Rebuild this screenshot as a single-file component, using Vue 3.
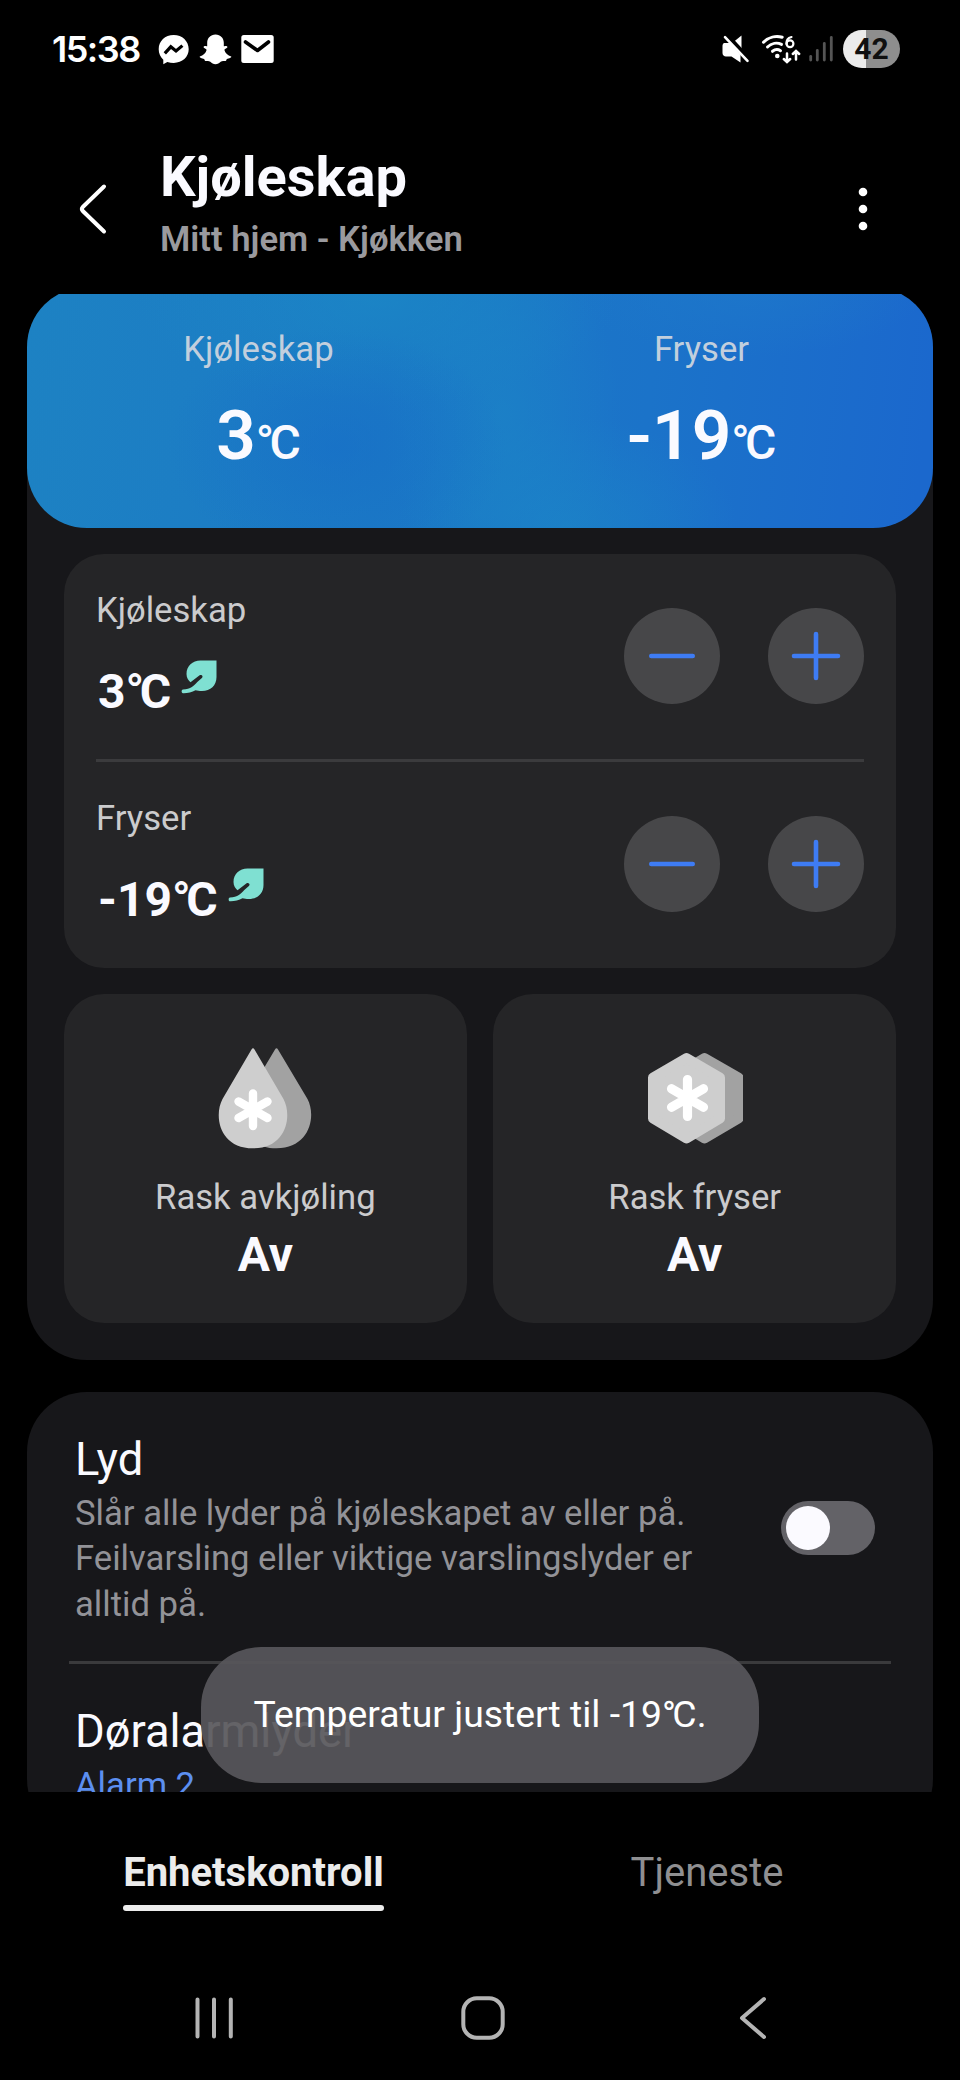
<script setup>
const zones = [
  { name: 'Kjøleskap', value: '3' },
  { name: 'Fryser', value: '-19' },
]
</script>

<template>
  <div class="phone">
    <header class="status">
      <span class="clock">15:38</span>
      <svg class="notif" width="116" height="32" viewBox="0 0 116 32">
        <path fill="#fff" d="M15.700 1C7 1 .700 7 .700 15.300c0 4.200 1.700 7.800 4.600 10.400v4.600l4-2.200c2 .600 4.200.800 6.400.800 8.600 0 15-6 15-13.600C30.700 7 24.300 1 15.700 1z" />
        <path fill="none" stroke="#000" stroke-width="3.200" d="M6.800 19.400l6-6.600 5.200 4.200 6.400-5.400" />
        <path fill="#fff" d="M57.500.500c5 0 8.300 3.600 8.300 8.300v3.400c1.200.300 3-.800 3.600.5.400 1.300-3 2-3 3.300.8 3 3.400 5.600 6.800 6.600.8.800-2.300 2.200-4.300 2.500-.600.500-.300 1.700-1.200 1.900-1.800.100-3.400-.200-5 .800-1.600 1.300-3 2.500-5.200 2.500s-3.600-1.200-5.200-2.500c-1.600-1-3.200-.700-5-.8-.900-.2-.600-1.400-1.200-1.900-2-.300-5.100-1.700-4.300-2.500 3.400-1 6-3.600 6.800-6.600 0-1.300-3.400-2-3-3.300.600-1.300 2.400-.2 3.600-.5V8.800c0-4.700 3.300-8.300 8.300-8.300z" />
        <rect x="83.300" y="1" width="32.400" height="28" rx="2.500" fill="#fff" />
        <path fill="none" stroke="#000" stroke-width="3.600" stroke-linecap="round" stroke-linejoin="round" d="M87.500 8l12 8.500 11-8.500" />
      </svg>
      <svg class="sys" width="116" height="32" viewBox="0 0 116 32">
        <path fill="#fff" d="M3 9h6.500l10 12v7.500L10.500 22.500H5c-2 0-3.500-1.500-3.500-3.500v-7c0-1.500.500-2.500 1.500-3z" />
        <path fill="#fff" d="M20.500 1.500v15L12.500 8z" />
        <path stroke="#000" stroke-width="2.600" d="M6.500 .500l22 24" />
        <path stroke="#fff" stroke-width="2.600" stroke-linecap="round" d="M4 3.200l22.500 23.600" />
        <g fill="none" stroke="#fff" stroke-width="3" stroke-linecap="round">
          <path d="M42.500 8.200c5-5.200 12.500-6.600 18.700-5" />
          <path d="M46.500 13c4-4 9.500-4.800 14-2.600" />
          <path d="M51.500 17.300c2.800-2.200 5.500-2.200 8-.6" />
          <path stroke-width="2.200" d="M70.500 3c-3.400.8-5.300 3.500-5 7" />
          <circle cx="69" cy="9.800" r="3.400" stroke-width="2.200" />
          <path stroke-width="2.500" d="M66 19.500v8m-3.200-2.500l3.200 3 3.200-3M75 25.500v-8m-3.200 2.500l3.200-3 3.200 3" />
        </g>
        <circle cx="56.300" cy="22" r="2.300" fill="#fff" />
        <g stroke="#555" stroke-width="2.800" stroke-linecap="round">
          <path d="M89.700 22.500v3.500" /><path d="M96.300 16.500v9.500" /><path d="M103.300 9.500v16.500" /><path d="M110.300 3.500v22.500" />
        </g>
      </svg>
      <span class="battery">42</span>
    </header>

    <div class="appbar">
      <svg class="back" width="32" height="54" viewBox="0 0 32 54">
        <path fill="none" stroke="#fff" stroke-width="4" stroke-linecap="round" stroke-linejoin="round" d="M27 4.500L5.800 25q-2 2 0 4L27 49.500" />
      </svg>
      <div class="heading">
        <h1>Kjøleskap</h1>
        <p>Mitt hjem - Kjøkken</p>
      </div>
      <svg class="more" width="12" height="46" viewBox="0 0 12 46" fill="#fff">
        <circle cx="6" cy="6" r="4.300" /><circle cx="6" cy="23" r="4.300" /><circle cx="6" cy="40" r="4.300" />
      </svg>
    </div>

    <main>
      <section class="panel first">
        <div class="hero">
          <div v-for="z in zones" :key="z.name" class="col">
            <div class="label">{{ z.name }}</div>
            <div class="big">{{ z.value }}<span class="unit"><span class="deg">°</span>C</span></div>
          </div>
        </div>
        <div class="card list">
          <div v-for="z in zones" :key="z.name" class="row">
            <div>
              <div class="label">{{ z.name }}</div>
              <div class="temp">
                <span>{{ z.value }}<span class="unit"><span class="deg">°</span>C</span></span>
                <svg width="36" height="34" viewBox="0 0 36 34">
                  <path fill="#7fe0d2" d="M35.500.500V17c0 8.500-6 14-14.500 14-3 0-4.500-.300-6.500-.800C11 32 6 33.500 2 33.300c-1.800-.3-1.800-3.500 0-3.700 7.500-.4 11.500-4.100 14.300-7.600l4.600-4c1.800-1.900-.6-4-2.600-2.500L9.500 22.200c-2-1.500-4-4.300-4-8.200C5.500 6 11.500.500 19.500.500z" />
                </svg>
              </div>
            </div>
            <div class="controls">
              <button aria-label="Minus"><svg width="96" height="96"><path d="M27.300 48h41.400" /></svg></button>
              <button aria-label="Pluss"><svg width="96" height="96"><path d="M26 48h44M48 26v44" /></svg></button>
            </div>
          </div>
        </div>
        <div class="tiles">
          <div class="card tile">
            <svg width="94" height="104" viewBox="0 0 94 104">
              <path fill="#a2a2a2" d="M57 2.500q1.500-2.600 3 0L89.500 52c9 17 2.500 49.300-31 49.300S18.500 69 27.500 52z" />
              <path fill="#cecece" d="M33.500 2.500q1.500-2.600 3 0L65.500 52c9 17 3 49.300-30.500 49.300S-4.500 69 4.500 52z" />
              <g stroke="#fff" stroke-width="8.400" stroke-linecap="round"><path d="M35 46.500v32.500M20.500 54.500l29 16.500M49.500 54.500l-29 16.500" /></g>
            </svg>
            <div class="label">Rask avkjøling</div>
            <div class="state">Av</div>
          </div>
          <div class="card tile">
            <svg width="96" height="104" viewBox="0 0 96 104">
              <g stroke-width="10" stroke-linejoin="round">
                <path fill="#a2a2a2" stroke="#a2a2a2" d="M57.500 11L91.500 30.500v41L57.500 91.500l-33-20v-41z" />
                <path fill="#cecece" stroke="#cecece" d="M39.500 11L73 30.500v41L39.500 91.500 6 71.500v-41z" />
              </g>
              <g stroke="#fff" stroke-width="9.200" stroke-linecap="round"><path d="M40.500 32.500v37M24.500 41.700l32 18.600M56.500 41.700l-32 18.600" /></g>
            </svg>
            <div class="label">Rask fryser</div>
            <div class="state">Av</div>
          </div>
        </div>
      </section>

      <section class="panel second">
        <div class="setting">
          <div>
            <h2>Lyd</h2>
            <p>Slår alle lyder på kjøleskapet av eller på.<br>Feilvarsling eller viktige varslingslyder er<br>alltid på.</p>
          </div>
          <div class="switch"><i></i></div>
        </div>
        <div class="setting alarm">
          <div>
            <h2>Døralarmlyder</h2>
            <p class="blue">Alarm 2</p>
          </div>
        </div>
      </section>
    </main>

    <nav class="tabs">
      <div class="tab"><b>Enhetskontroll</b></div>
      <div class="tab"><span>Tjeneste</span></div>
    </nav>

    <footer class="sysnav">
      <svg width="40" height="48" viewBox="0 0 40 48"><path d="M3.500 5.500v37M20 5.500v37M36.800 5.500v37" /></svg>
      <svg class="home" width="48" height="48" viewBox="0 0 48 48"><rect x="4.300" y="4.300" width="39.400" height="39.400" rx="13.500" /></svg>
      <svg width="30" height="48" viewBox="0 0 30 48"><path stroke-linejoin="round" d="M26 5L4 24l22 19" /></svg>
    </footer>

    <div class="toast">Temperatur justert til -19<span class="unit"><span class="deg">°</span>C</span>.</div>
  </div>
</template>

<style>
body { background: #000; }
</style>

<style scoped>
* { box-sizing: border-box; }
h1, h2, p { margin: 0; }
svg { display: block; flex: none; }
.phone {
  position: relative;
  width: 960px;
  height: 2080px;
  overflow: hidden;
  background: #000;
  color: #fafaff;
  font-family: Roboto, Inter, sans-serif;
}
.status { display: flex; align-items: flex-start; height: 98px; padding: 30px 60px 0 52px; }
.clock { width: 106px; line-height: 38px; font-family: Inter, sans-serif; font-weight: 600; font-size: 36px; letter-spacing: -1.500px; color: #fff; }
.notif { margin-top: 4px; }
.sys { margin: 4px 6px 0 auto; }
.battery {
  width: 57px; height: 38px; border-radius: 19px;
  background: linear-gradient(90deg, #ebebeb 23px, #8e8e8e 23px);
  color: #101010; font-weight: 700; font-size: 30px; line-height: 38px; text-align: center;
}
.appbar { display: flex; height: 196px; padding: 46px 91px 0 77px; }
.back { margin-top: 38px; }
.heading { margin-left: 51px; flex: 1; }
h1 { font-size: 56px; line-height: 66px; font-weight: 700; }
.heading p { margin-top: 7px; font-size: 34.670px; line-height: 44px; font-weight: 600; color: #9a9a9e; }
.more { margin-top: 42px; }
main { display: flex; flex-direction: column; height: 1498px; overflow: hidden; padding: 0 27px; }
.panel { flex: none; background: #17171a; border-radius: 60px; }
.first { height: 1073px; margin-top: -7px; }
.hero {
  display: flex; height: 241px; padding: 40px 10px 0; border-radius: 60px;
  background:
    radial-gradient(ellipse 170px 120px at 310px 160px, rgba(22, 108, 200, .55), transparent),
    radial-gradient(ellipse 240px 110px at 350px 10px, rgba(27, 139, 198, .6), transparent),
    radial-gradient(ellipse 120px 170px at 475px 130px, rgba(28, 137, 199, .5), transparent),
    radial-gradient(ellipse 170px 110px at 540px 240px, rgba(28, 135, 199, .6), transparent),
    radial-gradient(ellipse 180px 70px at 720px 0, rgba(30, 122, 202, .6), transparent),
    linear-gradient(97deg, #1d82c3 0%, #1b79c5 40%, #1b73c9 68%, #1b68cd 98%);
}
.col { flex: 1; text-align: center; }
.label { font-size: 34.670px; line-height: 44px; color: #cbcbcd; }
.hero .label { color: #c2cfdd; }
.big { margin-top: 25px; font-size: 69.330px; line-height: 80px; font-weight: 600; }
.unit { line-height: 1; }
.deg { letter-spacing: -.095em; }
.big .unit { font-size: 48px; font-weight: 500; }
.card { background: #252527; border-radius: 40px; }
.list { height: 414px; margin: 26px 37px 0; padding: 0 32px; }
.row { display: flex; justify-content: space-between; height: 208px; padding-top: 34px; }
.row:first-child { border-bottom: 3px solid #3b3b3d; }
.temp { display: flex; margin-top: 32px; padding-left: 2px; font-size: 48px; line-height: 56px; font-weight: 700; }
.temp svg { margin: -4px 0 0 10px; }
.controls { display: flex; gap: 48px; padding-top: 20px; }
button { width: 96px; height: 96px; padding: 0; border: 0; border-radius: 50%; background: #474749; }
button path { stroke: #3e7cf4; stroke-width: 4.600; stroke-linecap: round; fill: none; }
.tiles { display: flex; gap: 26.670px; margin: 26px 37px 0; }
.tile { flex: 1; height: 329px; padding-top: 53px; display: flex; flex-direction: column; align-items: center; }
.tile .label { margin-top: 24px; }
.state { margin-top: 8px; font-size: 48px; line-height: 56px; font-weight: 700; }
.second { height: 447px; margin-top: 32px; padding: 40px 42px 0; }
.setting { display: flex; justify-content: space-between; height: 232px; padding: 0 16px 0 6px; border-bottom: 3px solid #3a3a3c; }
h2 { font-size: 45.330px; line-height: 56px; font-weight: 400; }
.setting p { margin-top: 3px; font-size: 34.670px; line-height: 45.400px; color: #929297; }
.setting .blue { color: #5c8ff0; }
.alarm { padding-top: 40px; border: 0; }
.switch { width: 94px; height: 54px; margin-top: 69px; padding: 5px; border-radius: 27px; background: #636267; }
.switch i { display: block; width: 44px; height: 44px; border-radius: 50%; background: #fbfaff; }
.tabs { display: flex; height: 150px; padding: 0 27px; }
.tab { flex: 1; display: flex; justify-content: center; padding-top: 57px; font-size: 40px; line-height: 48px; }
.tab b { font-weight: 700; color: #ececec; }
.tab b::after { content: ""; display: block; height: 6px; margin-top: 8px; border-radius: 3px; background: #ececec; }
.tab span { padding-left: 1px; color: #8f8f91; }
.sysnav { display: flex; justify-content: space-between; height: 96px; margin-top: 52px; padding: 0 192px 0 194px; }
.sysnav svg { fill: none; stroke: #b4b4b4; stroke-width: 4; stroke-linecap: round; }
.sysnav .home { margin-right: 6px; }
.toast {
  position: absolute; left: 201px; top: 1647px; width: 558px; height: 136px; border-radius: 60px;
  background: rgba(87, 86, 91, .925); color: #fff;
  font-size: 37.330px; line-height: 134px; text-align: center; white-space: nowrap;
}
</style>
